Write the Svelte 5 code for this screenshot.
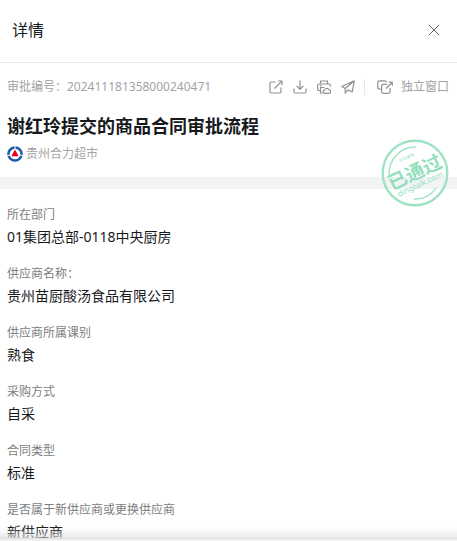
<script lang="ts">
	const approvalNo = '202411181358000240471';

	const fields = [
		{ label: '所在部门', value: '01集团总部-0118中央厨房' },
		{ label: '供应商名称：', value: '贵州苗厨酸汤食品有限公司' },
		{ label: '供应商所属课别', value: '熟食' },
		{ label: '采购方式', value: '自采' },
		{ label: '合同类型', value: '标准' },
		{ label: '是否属于新供应商或更换供应商', value: '新供应商' }
	];
</script>

<div class="panel">
	<header class="header">
		<h1>详情</h1>
		<button class="close" aria-label="关闭">
			<svg width="12" height="12" viewBox="0 0 12 12">
				<path d="M.8.8l10.4 10.4M11.2.8L.8 11.2" />
			</svg>
		</button>
	</header>

	<main class="content">
		<section class="summary">
			<div class="meta">
				<span class="number">审批编号：{approvalNo}</span>
				<div class="tools">
					<div class="actions">
						<button aria-label="分享">
							<svg width="14" height="14" viewBox="0 0 14 14">
								<path d="M6.5 2H2.2Q1 2 1 3.2v8.6Q1 13 2.2 13h8.6q1.2 0 1.2-1.2V7.5M5.5 8.5l7.3-7.3M9 1h4v4" />
							</svg>
						</button>
						<button aria-label="下载">
							<svg width="14" height="14" viewBox="0 0 14 14">
								<path d="M7 .5v8.7M3.700 6L7 9.300 10.300 6M1 8.500v3.300Q1 13 2.200 13h9.600q1.200 0 1.200-1.200V8.500" />
							</svg>
						</button>
						<button aria-label="打印">
							<svg width="14" height="14" viewBox="0 0 14 14">
								<path d="M3.5 4V1h7v3M3.500 10.500H1.700Q.7 10.500.7 9.500V5q0-1 1-1h10.600q1 0 1 1v1.500M5.500 13h-2V7.500h4M3 5.800h1.500" />
								<path d="M7.8 13.300a1.700 1.700 0 0 1-.1-3.400 2.300 2.300 0 0 1 4.300 0 1.700 1.700 0 0 1 .1 3.400z" />
							</svg>
						</button>
						<button aria-label="发送">
							<svg width="14" height="14" viewBox="0 0 14 14">
								<path d="M13.2.8L.8 6.5l3.400 2L13.200.8 11.200 12 7 9.800M4.200 8.500v4.700L7 9.800" />
							</svg>
						</button>
					</div>
					<button class="window">
						<svg width="16" height="14" viewBox="0 0 16 14">
							<path d="M4 9H2.5Q.8 9 .8 7.300V2.500Q.8.8 2.500.8h5.200q1.700 0 1.700 1.700" />
							<path d="M10 4.3H6.200Q4.600 4.300 4.600 6v5.600q0 1.700 1.600 1.700h5.200q1.700 0 1.700-1.700V8M9 8.500l6-6M11.500 2h3.800v3.800" />
						</svg>
						独立窗口
					</button>
				</div>
			</div>
			<h2>谢红玲提交的商品合同审批流程</h2>
			<div class="company">
				<svg width="16" height="16" viewBox="0 0 16 16">
					<circle cx="8" cy="8" r="6.6" fill="none" stroke="#1b5ba8" stroke-width="2.5" />
					<path d="M0 9.8l3.500-1M16 9.800l-3.500-1M8 0v3" stroke="#fff" />
					<path d="M8 3.5l3.600 6.800H4.400z" fill="#e60020" />
				</svg>
				贵州合力超市
			</div>

			<svg class="stamp" viewBox="0 0 68 68" role="img" aria-label="已通过">
				<circle cx="34" cy="34" r="32.3" fill="none" stroke-width="2.4" />
				<g transform="rotate(-25 34 34)">
					<path d="M10 24.500A26 26 0 0 1 46 11M22 57A26 26 0 0 0 47 56.500" fill="none" stroke-width="1.4" />
					<text class="tiny" x="33" y="18">钉钉审批</text>
					<text class="big" x="34" y="40">已通过</text>
					<text class="site" x="34" y="49">dingtalk.com</text>
				</g>
			</svg>
		</section>

		<dl class="fields">
			{#each fields as field}
				<div class="field">
					<dt>{field.label}</dt>
					<dd>{field.value}</dd>
				</div>
			{/each}
		</dl>
	</main>

	<footer class="edge"></footer>
</div>

<style>
	:global(body) {
		margin: 0;
		background: #fff;
		font-family: 'Noto Sans', 'Noto Sans CJK SC', sans-serif;
	}

	.panel {
		display: flex;
		flex-direction: column;
		height: 100vh;
		background: #fff;
	}

	button {
		display: inline-flex;
		align-items: center;
		padding: 0;
		border: none;
		background: none;
		color: inherit;
		font: inherit;
		cursor: pointer;
	}

	button svg {
		fill: none;
		stroke: currentColor;
		stroke-linejoin: round;
	}

	/* Title bar */
	.header {
		display: flex;
		flex: none;
		align-items: center;
		justify-content: space-between;
		height: 60px;
		padding: 0 17px 2px 12px;
		border-bottom: 1px solid #e9eaeb;
	}

	h1 {
		margin: 0;
		color: #171a1d;
		font-size: 16px;
		font-weight: 400;
		line-height: 24px;
	}

	.close {
		color: #5f6970;
	}

	.content {
		flex: 1;
		min-height: 0;
		overflow: hidden;
	}

	.summary {
		position: relative;
		padding: 14px 8px 13px 7px;
		border-bottom: 12px solid #f2f3f5;
	}

	.meta {
		display: flex;
		align-items: center;
		justify-content: space-between;
		height: 20px;
		color: #a2a3a5;
		font-size: 12px;
		line-height: 20px;
		white-space: nowrap;
	}

	.tools,
	.actions {
		display: flex;
		align-items: center;
		gap: 10px;
	}

	.tools {
		gap: 9px;
	}

	.tools svg {
		stroke: #8f9193;
		stroke-width: 1.2;
	}

	.window {
		gap: 8px;
		padding-left: 12px;
		border-left: 1px solid #e5e6e8;
		line-height: 16px;
	}

	h2 {
		margin: 15px 0 4px;
		color: #171a1d;
		font-size: 18px;
		font-weight: 700;
		line-height: 28px;
	}

	.company {
		display: flex;
		align-items: center;
		gap: 3px;
		color: #a2a3a5;
		font-size: 12px;
		line-height: 20px;
	}

	/* Approval stamp, lies over the divider */
	.stamp {
		position: absolute;
		right: 8px;
		bottom: -30px;
		width: 68px;
		height: 68px;
		stroke: #9fe3c5;
	}

	.stamp text {
		fill: #93dfbd;
		stroke: none;
		text-anchor: middle;
	}

	.stamp .tiny {
		font-size: 4px;
	}

	.stamp .big {
		font-size: 19px;
		font-weight: 700;
	}

	.stamp .site {
		font-size: 8px;
	}

	/* Form values */
	.fields {
		margin: 0;
		padding: 15px 7px;
	}

	.field {
		margin-bottom: 15px;
	}

	dt {
		color: #7c7e80;
		font-size: 12px;
		line-height: 22px;
	}

	dd {
		margin: 0;
		color: #171a1d;
		font-size: 14px;
		line-height: 22px;
	}

	.edge {
		position: relative;
		flex: none;
		height: 2px;
		border-top: 1px solid #dcdddf;
		background: #f1f1f3;
	}

	/* Shadow over the end of the scrolled list */
	.edge::before {
		position: absolute;
		right: 0;
		bottom: 100%;
		left: 0;
		height: 12px;
		background: linear-gradient(rgba(220, 224, 223, 0), rgba(220, 224, 223, 0.7));
		content: '';
	}
</style>
